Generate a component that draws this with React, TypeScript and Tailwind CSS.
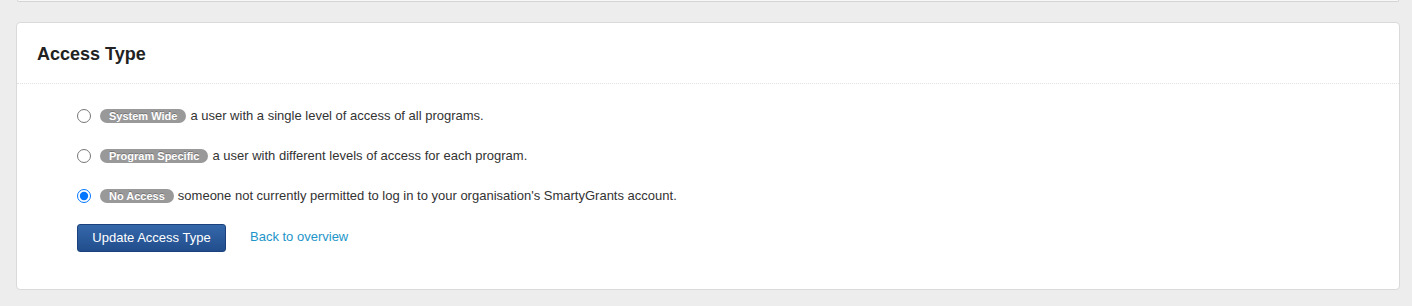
import { useState } from "react";

type AccessOption = {
  id: string;
  label: string;
  description: string;
};

const OPTIONS: AccessOption[] = [
  { id: "system", label: "System Wide", description: "a user with a single level of access of all programs." },
  { id: "program", label: "Program Specific", description: "a user with different levels of access for each program." },
  {
    id: "none",
    label: "No Access",
    description: "someone not currently permitted to log in to your organisation's SmartyGrants account.",
  },
];

export default function App() {
  const [access, setAccess] = useState("none");

  return (
    <main className="min-h-screen bg-[#ededed] pb-4 font-['Liberation_Sans',Arial,sans-serif] text-[#333]">
      <div className="ml-[17px] mr-[13px] h-[2px] rounded-b-[4px] border border-t-0 border-[#d4d4d4] bg-[#f7f7f7]" />
      <section className="ml-[16px] mr-[12px] mt-[20px] rounded-[4px] border border-[#dadada] bg-white">
        <header className="flex h-[61px] items-center border-b border-dotted border-[#e2e2e2] px-[20px] pt-[2px]">
          <h2 className="text-[18px] font-bold text-[#222]">Access Type</h2>
        </header>
        <div className="pb-[37px] pl-[60px] pt-[22px]">
          <div className="flex flex-col gap-[20px]">
            {OPTIONS.map((opt) => (
              <label key={opt.id} className="flex h-[20px] cursor-pointer items-center text-[13px]">
                <input
                  type="radio"
                  name="access"
                  checked={access === opt.id}
                  onChange={() => setAccess(opt.id)}
                  className="m-0 h-[14px] w-[14px]"
                />
                <span className="ml-[9px] rounded-full bg-[#999] px-[9px] py-[1px] text-[11px] font-bold leading-[12px] text-white [text-shadow:0_-1px_0_rgba(0,0,0,0.25)]">
                  {opt.label}
                </span>
                <span className="ml-[4px]">{opt.description}</span>
              </label>
            ))}
          </div>
          <div className="mt-[18px] flex items-center gap-[24px]">
            <button className="h-[28px] w-[149px] rounded-[3px] border border-[#1b427c] bg-[linear-gradient(#3568aa,#214d8c)] text-[13px] text-white">
              Update Access Type
            </button>
            <a href="#" className="-mt-[3px] text-[13px] text-[#1d95c9]">
              Back to overview
            </a>
          </div>
        </div>
      </section>
    </main>
  );
}
